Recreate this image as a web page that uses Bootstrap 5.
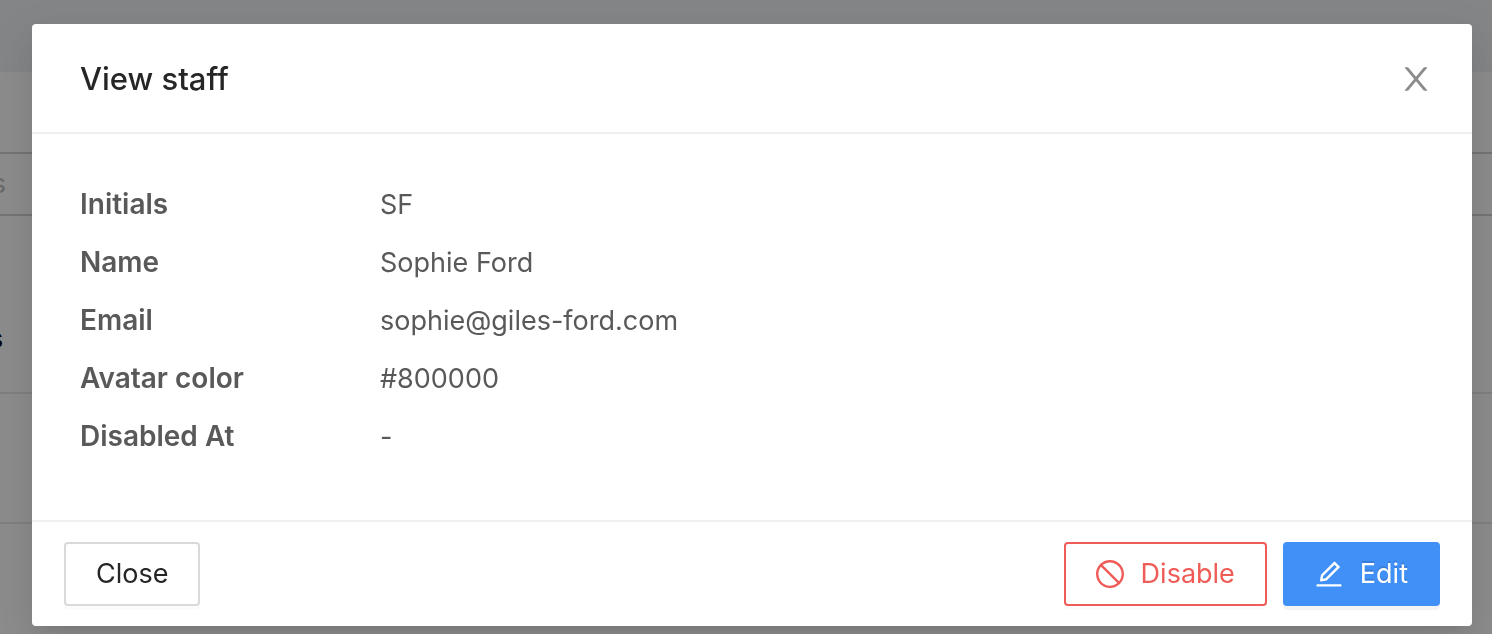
<!DOCTYPE html>
<html lang="en">
<head>
<meta charset="utf-8">
<meta name="viewport" content="width=device-width, initial-scale=1">
<title>View staff</title>
<link href="https://cdn.jsdelivr.net/npm/bootstrap@5.3.0/dist/css/bootstrap.min.css" rel="stylesheet">
<style>
  body { font-family: Inter, "Liberation Sans", sans-serif; font-size: 27px; line-height: 44px; color: #000; background: #fff; }
  .page-top { height: 72px; background: #f0f2f5; }
  .filter-bar { height: 64px; margin-top: 80px; border-top: 2px solid #d2d2d2; border-bottom: 2px solid #d2d2d2; }
  .cut-text { overflow: hidden; }
  .filter-bar .cut-text { width: 6px; color: #bfbfbf; }
  .head-row { height: 178px; border-bottom: 2px solid #e8e8e8; padding-top: 101px; }
  .head-row .cut-text { width: 3px; }
  .data-row { height: 130px; border-bottom: 2px solid #e8e8e8; }
  .data-row + .data-row { height: 112px; }
  .shade { background: rgba(0, 0, 0, .45); }
  .staff-dialog { max-width: none; margin: 24px 20px 8px 32px; }
  .staff-content { border: 0; border-radius: 4px; box-shadow: 0 6px 12px -8px rgba(0, 0, 0, .12), 0 12px 32px rgba(0, 0, 0, .08), 0 18px 56px 16px rgba(0, 0, 0, .05); --bs-modal-color: #595959; color: #595959; }
  .staff-header { padding: 33px 40px 31px 48px; border-bottom: 2px solid #f0f0f0; border-radius: 0; }
  .staff-header h1 { font-size: 31px; line-height: 44px; font-weight: 500; color: #262626; }
  .x-button { color: #8c8c8c; border: 0; background: none; width: 32px; height: 32px; }
  .staff-body { padding: 48px 48px 62px; }
  .staff-list { display: grid; grid-template-columns: 300px 1fr; grid-auto-rows: 44px; row-gap: 14px; align-items: baseline; }
  .staff-list dt { font-size: 28px; font-weight: 600; }
  .staff-footer { padding: 20px 32px; border-top: 2px solid #f0f0f0; }
  .act { height: 64px; padding: 0 30px; border-width: 2px; border-radius: 4px; font-size: 27px; line-height: 44px; gap: 17px; box-shadow: 0 4px 0 rgba(0, 0, 0, .016); }
  .act-plain { --bs-btn-color: #262626; --bs-btn-border-color: #d9d9d9; --bs-btn-bg: #fff; }
  .act-danger { --bs-btn-color: #ef5b56; --bs-btn-border-color: #ef5b56; --bs-btn-bg: #fff; }
  .act-main { --bs-btn-color: #fff; --bs-btn-border-color: #4090f7; --bs-btn-bg: #4090f7; box-shadow: 0 4px 0 rgba(0, 0, 0, .045); text-shadow: 0 -2px 0 rgba(0, 0, 0, .12); }
  svg { fill: currentColor; display: block; }
</style>
</head>
<body class="overflow-hidden">
  <main aria-hidden="true">
    <div class="page-top"></div>
    <div class="filter-bar d-flex align-items-center"><div class="cut-text d-flex justify-content-end">s</div></div>
    <div class="head-row"><div class="cut-text d-flex justify-content-end fw-semibold">s</div></div>
    <div class="data-row"></div>
    <div class="data-row"></div>
  </main>

  <div class="modal d-block shade overflow-hidden" role="dialog" aria-modal="true" aria-labelledby="staff-title">
    <div class="modal-dialog staff-dialog">
      <div class="modal-content staff-content">
        <div class="modal-header staff-header d-flex justify-content-between align-items-center">
          <h1 class="modal-title" id="staff-title">View staff</h1>
          <button type="button" class="x-button p-0" aria-label="Close dialog">
            <svg width="32" height="32" viewBox="64 64 896 896"><path d="M563.8 512l262.5-312.9c4.4-5.2.7-13.1-6.1-13.1h-79.8c-4.7 0-9.2 2.1-12.3 5.7L511.6 449.8 295.1 191.7c-3-3.6-7.5-5.7-12.3-5.7H203c-6.8 0-10.5 7.9-6.1 13.1L459.4 512 196.9 824.9A7.95 7.95 0 0 0 203 838h79.8c4.7 0 9.2-2.1 12.3-5.7l216.5-258.1 216.5 258.1c3 3.6 7.5 5.7 12.3 5.7h79.8c6.8 0 10.5-7.9 6.1-13.1L563.8 512z"/></svg>
          </button>
        </div>
        <div class="modal-body staff-body">
          <dl class="staff-list mb-0">
            <dt>Initials</dt><dd class="mb-0">SF</dd>
            <dt>Name</dt><dd class="mb-0">Sophie Ford</dd>
            <dt>Email</dt><dd class="mb-0">sophie@giles-ford.com</dd>
            <dt>Avatar color</dt><dd class="mb-0">#800000</dd>
            <dt>Disabled At</dt><dd class="mb-0">-</dd>
          </dl>
        </div>
        <div class="staff-footer d-flex justify-content-between">
          <button type="button" class="btn act act-plain">Close</button>
          <div class="d-flex gap-3">
            <button type="button" class="btn act act-danger d-flex align-items-center">
              <svg width="28" height="28" viewBox="64 64 896 896" aria-hidden="true"><path d="M512 64C264.6 64 64 264.6 64 512s200.6 448 448 448 448-200.6 448-448S759.4 64 512 64zm0 820c-205.4 0-372-166.6-372-372 0-89 31.3-170.8 83.5-234.8l523.3 523.3C682.8 852.7 601 884 512 884zm288.5-137.2L277.2 223.5C341.2 171.3 423 140 512 140c205.4 0 372 166.6 372 372 0 89-31.3 170.8-83.5 234.8z"/></svg>
              Disable
            </button>
            <button type="button" class="btn act act-main d-flex align-items-center">
              <svg width="28" height="28" viewBox="64 64 896 896" aria-hidden="true"><path d="M257.7 752c2 0 4-.2 6-.5L431.9 722c2-.4 3.9-1.3 5.3-2.8l423.9-423.9a9.96 9.96 0 0 0 0-14.1L694.9 114.9c-1.9-1.9-4.4-2.9-7.1-2.9s-5.2 1-7.1 2.9L256.8 538.8c-1.5 1.5-2.4 3.3-2.8 5.3l-29.5 168.2a33.5 33.5 0 0 0 9.4 29.8c6.6 6.4 14.9 9.9 23.8 9.9zm67.4-174.4L687.8 215l73.3 73.3-362.7 362.6-88.9 15.7 15.6-89zM880 836H144c-17.7 0-32 14.3-32 32v36c0 4.4 3.6 8 8 8h784c4.4 0 8-3.6 8-8v-36c0-17.7-14.3-32-32-32z"/></svg>
              Edit
            </button>
          </div>
        </div>
      </div>
    </div>
  </div>
<script src="https://cdn.jsdelivr.net/npm/bootstrap@5.3.0/dist/js/bootstrap.bundle.min.js"></script>
</body>
</html>
